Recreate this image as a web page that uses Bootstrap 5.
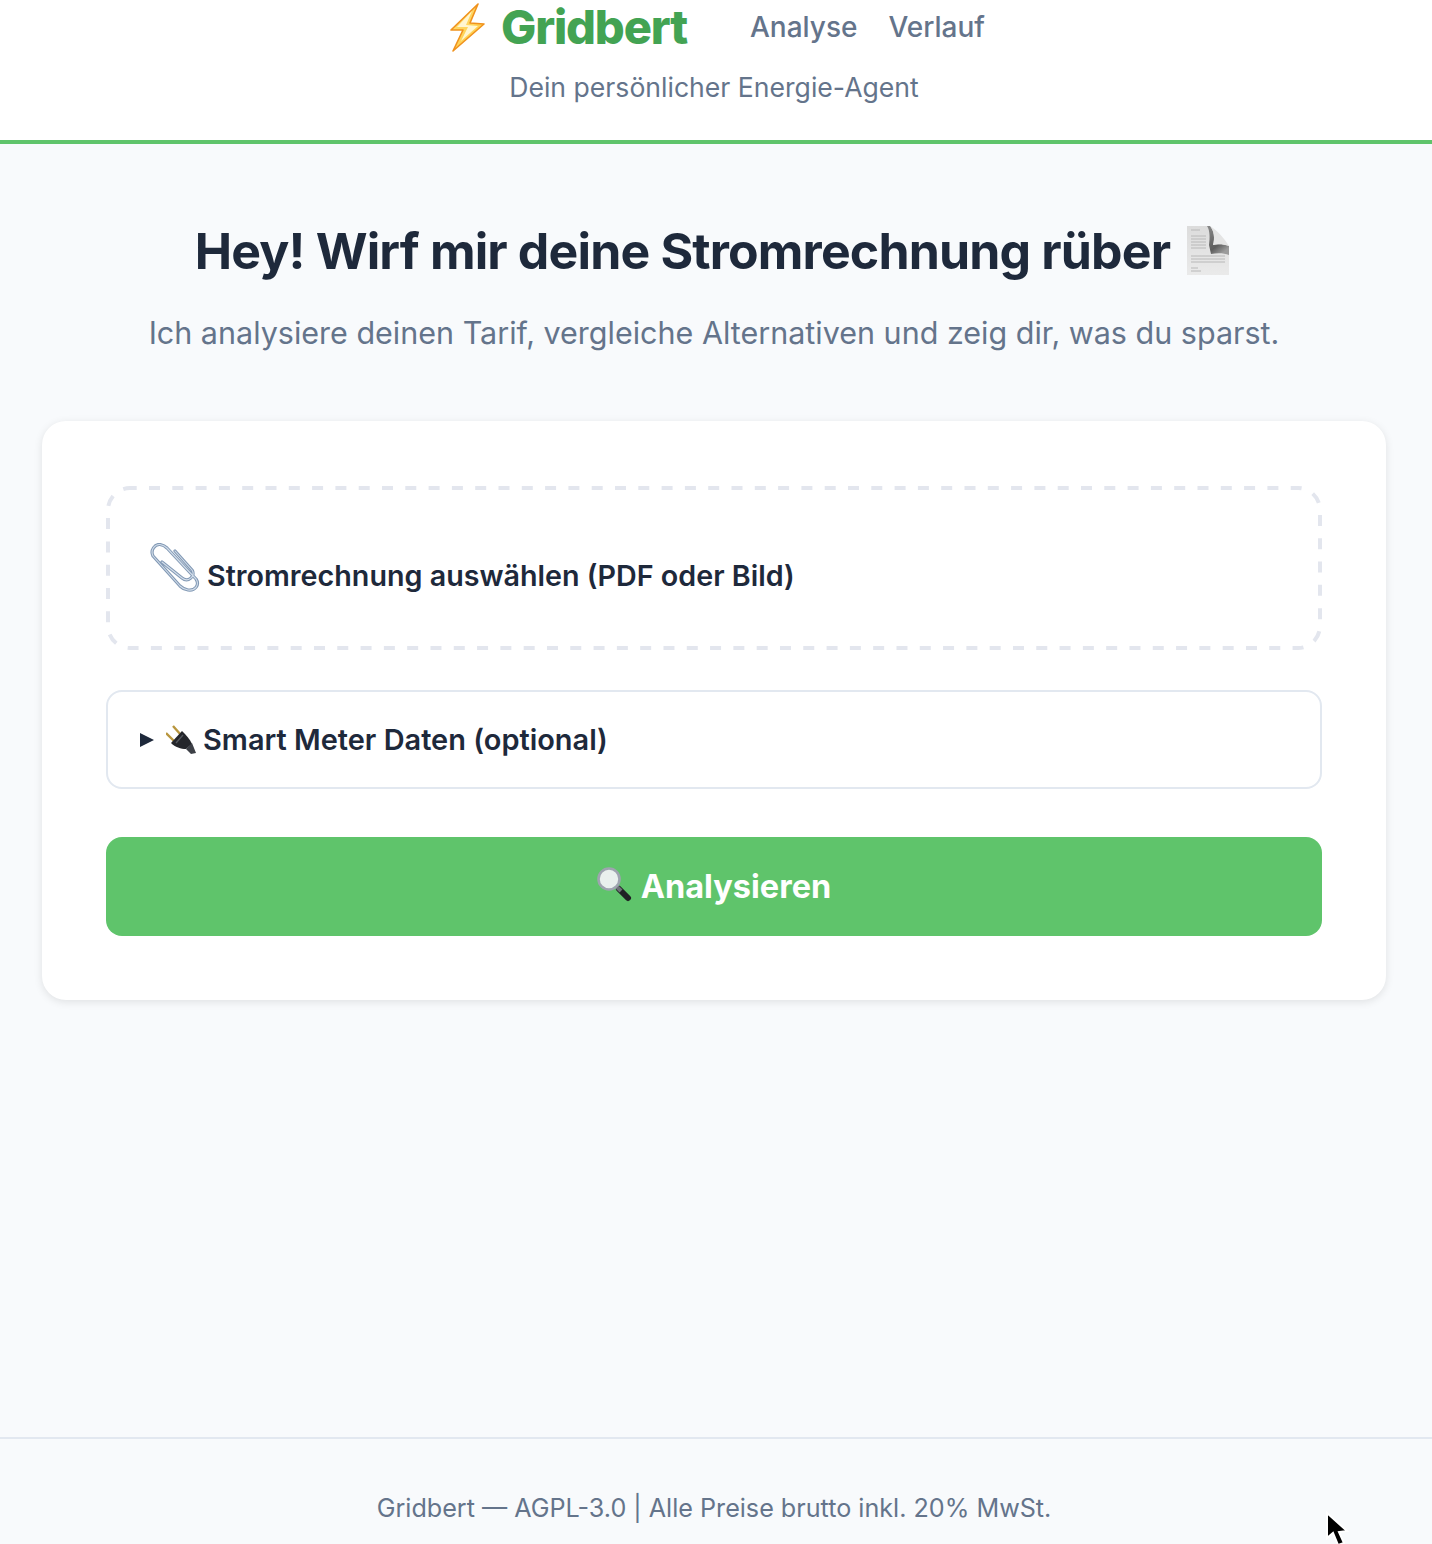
<!DOCTYPE html>
<html lang="de">
<head>
    <meta charset="UTF-8">
    <meta name="viewport" content="width=device-width, initial-scale=1.0">
    <title>Gridbert</title>
    <link rel="stylesheet" href="https://cdn.jsdelivr.net/npm/bootstrap@5.3.0/dist/css/bootstrap.min.css">
    <style>
        html, body { height: 100%; }
        body {
            font-family: Inter, "Liberation Sans", sans-serif;
            background-color: #f8fafc;
            color: #1e293b;
            height: 1544px;
            position: relative;
            overflow: hidden;
        }
        .top-head {
            background: #fff;
            border-bottom: 4px solid #5fc46b;
            height: 144px;
        }
        .brand-row { height: 54px; }
        .brand-name {
            font-size: 47px;
            font-weight: 800;
            letter-spacing: -1.2px;
            color: #43a353;
            line-height: 54px;
            margin-left: 16px;
        }
        .main-nav { margin-left: 63px; gap: 31px; }
        .main-nav a {
            font-size: 28px;
            font-weight: 500;
            color: #64748b;
            text-decoration: none;
        }
        .tagline { font-size: 26.6px; color: #64748b; line-height: 32px; margin-top: 17px; padding-right: 4px; }
        .hero-wrap { padding-right: 4px; }
        .hero-title {
            font-size: 50px;
            font-weight: 700;
            letter-spacing: -0.85px;
            line-height: 58px;
            color: #1e293b;
            margin: 78px 0 0;
            padding-right: 3px;
        }
        .hero-sub { font-size: 30.5px; color: #64748b; line-height: 38px; margin: 34px 0 0; }
        .upload-card {
            background: #fff;
            border: 0;
            border-radius: 24px;
            margin: 69px 46px 0 42px;
            padding: 65px 64px 64px;
            box-shadow: 0 2px 8px rgba(0, 0, 0, .1);
        }
        .drop-zone {
            height: 164px;
            background: url("data:image/svg+xml,%3Csvg xmlns='http://www.w3.org/2000/svg' width='1216' height='164'%3E%3Crect x='2' y='2' width='1212' height='160' rx='22' fill='none' stroke='%23e3e6ee' stroke-width='4' stroke-dasharray='11 12.3' stroke-dashoffset='4.3'/%3E%3C/svg%3E") no-repeat;
            padding-left: 44px;
            font-size: 28.7px;
            font-weight: 600;
            gap: 7px;
        }
        .drop-label { line-height: 1; margin-top: 16px; }
        .meter-box {
            height: 99px;
            border: 2px solid #e2e8f0;
            border-radius: 16px;
            margin-top: 40px;
            padding-left: 32px;
            font-size: 28.95px;
            font-weight: 600;
        }
        .plug-icon { margin: 0 7px 0 4px; }
        .go-btn {
            height: 99px;
            margin-top: 48px;
            padding-top: 8px;
            background: #5fc46b;
            border: 0;
            border-radius: 16px;
            color: #fff;
            font-size: 32.5px;
            font-weight: 700;
            gap: 8px;
        }
        .go-btn svg { margin-top: -6px; }
        .go-btn:hover { background: #5fc46b; color: #fff; }
        .page-foot {
            position: absolute;
            left: 0; right: 0; bottom: 0;
            height: 107px;
            border-top: 2px solid #e2e8f0;
            padding: 53px 4px 0 0;
            font-size: 25.15px;
            line-height: 32px;
            color: #64748b;
        }
        .mouse-ptr { position: absolute; left: 1324px; top: 1511px; }
    </style>
</head>
<body>
    <header class="top-head text-center">
        <div class="brand-row d-flex justify-content-center align-items-center">
            <svg width="38" height="52" viewBox="0 0 38 52" class="flex-shrink-0">
                <defs>
                    <linearGradient id="bolt" x1="0" y1="0" x2="1" y2="1">
                        <stop offset="0" stop-color="#ffe07a"/>
                        <stop offset="1" stop-color="#ffc93c"/>
                    </linearGradient>
                </defs>
                <path d="M31 3 L4 29 L16 29 L6 50 L37 23 L23 22 Z" fill="url(#bolt)" stroke="#f0921e" stroke-width="1.6" stroke-linejoin="round"/>
                <path d="M25 10 L10 26 L21 26 L14 40 L31 25 L19 24 Z" fill="#fff6d2"/>
            </svg>
            <span class="brand-name">Gridbert</span>
            <nav class="main-nav d-flex">
                <a href="#">Analyse</a>
                <a href="#">Verlauf</a>
            </nav>
        </div>
        <p class="tagline mb-0">Dein persönlicher Energie-Agent</p>
    </header>

    <main>
        <div class="hero-wrap text-center">
            <h1 class="hero-title d-flex justify-content-center align-items-center gap-3">
                Hey! Wirf mir deine Stromrechnung rüber
                <svg width="44" height="52" viewBox="0 0 44 52">
                    <defs>
                        <linearGradient id="sheet" x1="0" y1="0" x2="0" y2="1">
                            <stop offset="0" stop-color="#dcdcdc"/>
                            <stop offset="1" stop-color="#eaeaea"/>
                        </linearGradient>
                        <linearGradient id="shade" x1="0" y1="0" x2="0.6" y2="1">
                            <stop offset="0" stop-color="#8a8a8a"/>
                            <stop offset="0.7" stop-color="#5c5c5c"/>
                            <stop offset="1" stop-color="#9c9c9c"/>
                        </linearGradient>
                        <filter id="soft"><feGaussianBlur stdDeviation="0.7"/></filter>
                    </defs>
                    <g filter="url(#soft)">
                        <path d="M1 1 H24 L43 22 V50 H1 Z" fill="url(#sheet)"/>
                        <path d="M5 5h9M5 11h15M5 14h15M5 17h15M5 20h15M5 23h15M5 31h34M5 34h34M5 37h34M5 43h7M5 46h10" stroke="#b8b8b8" stroke-width="1"/>
                        <path d="M21 1 C24 5 24 13 23 20 L25 29 C31 28 38 28 43 30 V21 C38 19 31 19 27 20 C29 13 28 6 24 1 Z" fill="url(#shade)"/>
                        <path d="M24 1 C31 5 38 13 43 21 C37 19 31 19 27 20 C29 13 28 6 24 1 Z" fill="#e4e4e4"/>
                    </g>
                </svg>
            </h1>
            <p class="hero-sub">Ich analysiere deinen Tarif, vergleiche Alternativen und zeig dir, was du sparst.</p>
        </div>

        <div class="card upload-card">
            <label class="drop-zone d-flex align-items-center" for="billFile">
                <svg width="50" height="50" viewBox="0 0 50 50" class="flex-shrink-0">
                    <g fill="none" stroke-linecap="round" stroke-linejoin="round">
                        <path d="M25 8 L42 27 C46 33 38 40 32 35 L12 19 M3 13 C0 7 5 1 10 1.5 C13 2 15 3 17 5 L46 36 C50 42 45 48 38 47 C35 46.5 32 45 30 43 L3 13" stroke="#8299b5" stroke-width="3.2"/>
                        <path d="M25 8 L42 27 C46 33 38 40 32 35 L12 19 M3 13 C0 7 5 1 10 1.5 C13 2 15 3 17 5 L46 36 C50 42 45 48 38 47 C35 46.5 32 45 30 43 L3 13" stroke="#d3deea" stroke-width="1.1"/>
                    </g>
                </svg>
                <span class="drop-label">Stromrechnung auswählen (PDF oder Bild)</span>
            </label>
            <input id="billFile" type="file" class="d-none">

            <div class="meter-box d-flex align-items-center">
                <svg width="14" height="14" viewBox="0 0 14 14" class="flex-shrink-0 me-2">
                    <path d="M0 0 L14 7 L0 14 Z" fill="#1e293b"/>
                </svg>
                <svg width="30" height="30" viewBox="0 0 30 30" class="plug-icon flex-shrink-0">
                    <path d="M7 1 L15 10 M0 8 L8 16" stroke="#b8963e" stroke-width="2.4"/>
                    <path d="M5 18 L16 6 C20 10 24 14 26 19 L20 24 C15 24 9 22 5 18 Z" fill="#24262b"/>
                    <path d="M20 24 L26 18 L30 28 L25 29 Z" fill="#3d4047"/>
                    <path d="M10 18 L17 10" stroke="#55585f" stroke-width="1.4"/>
                </svg>
                <span>Smart Meter Daten (optional)</span>
            </div>

            <button type="button" class="btn go-btn w-100 d-flex justify-content-center align-items-center">
                <svg width="36" height="35" viewBox="0 0 36 35" class="flex-shrink-0">
                    <path d="M22 22 L31 31" stroke="#1f2024" stroke-width="6" stroke-linecap="round"/>
                    <path d="M20 20 L24 24" stroke="#6e7178" stroke-width="4"/>
                    <circle cx="12" cy="12" r="10.5" fill="#e9f0ed" stroke="#9ea4af" stroke-width="2.6"/>
                </svg>
                <span>Analysieren</span>
            </button>
        </div>
    </main>

    <footer class="page-foot text-center">Gridbert — AGPL-3.0 | Alle Preise brutto inkl. 20% MwSt.</footer>

    <svg class="mouse-ptr" width="28" height="36" viewBox="0 0 28 36">
        <path d="M3 2 V27 L9 22 L14 34 L20 32 L15 21 L23 20 Z" fill="#000" stroke="#fff" stroke-width="2"/>
    </svg>

    <script src="https://cdn.jsdelivr.net/npm/bootstrap@5.3.0/dist/js/bootstrap.bundle.min.js"></script>
</body>
</html>
